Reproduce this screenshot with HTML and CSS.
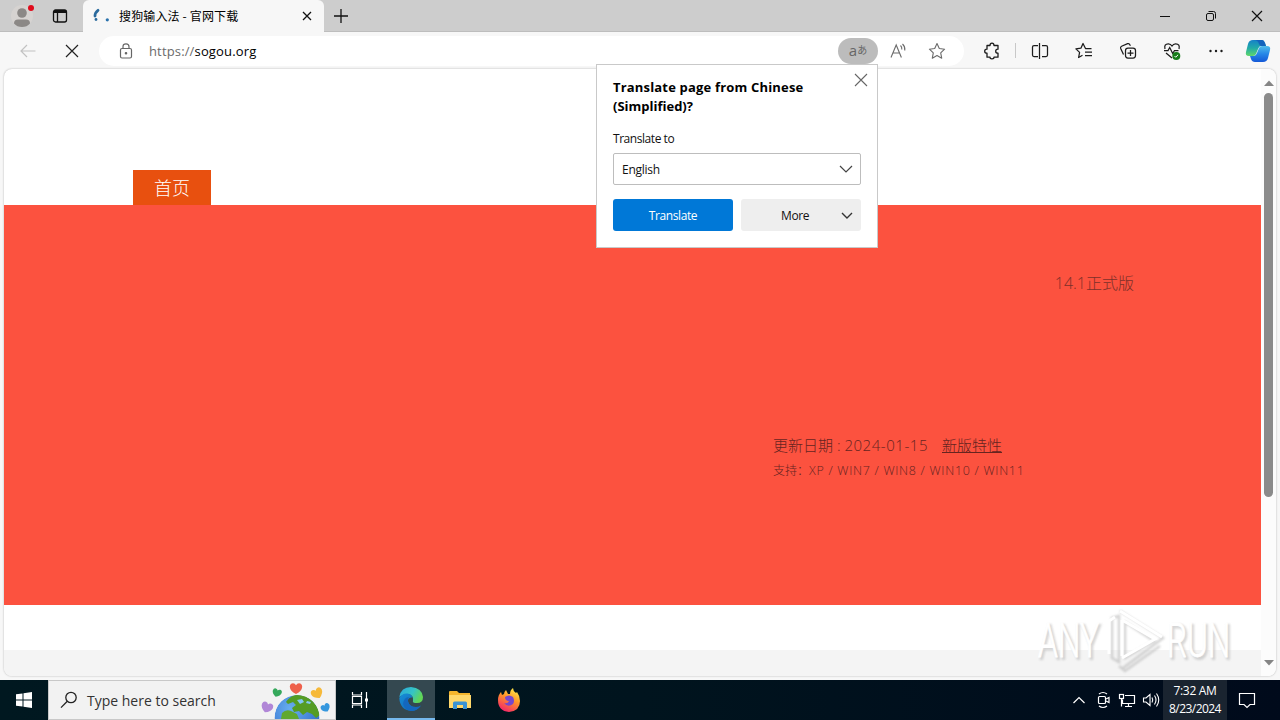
FILE: index.html
```html
<!DOCTYPE html>
<html lang="en">
<head>
<meta charset="utf-8">
<title>搜狗输入法 - 官网下载</title>
<link rel="stylesheet" href="styles.css">
</head>
<body>
<div class="screen">
  <header class="tabs">
    <div class="profile"><svg width="36" height="32" viewBox="0 0 36 32"><circle cx="18" cy="16" r="11" fill="#d6d3d1"/><circle cx="18" cy="13" r="4.8" fill="#8b8886"/><path d="M10 23.500q0-4 4-4h8q4 0 4 4-3 3.500-8 3.500t-8-3.500z" fill="#8b8886"/><circle cx="27" cy="8" r="3" fill="#e00b1c"/></svg></div>
    <div class="tabmenu"><svg width="16" height="16" viewBox="0 0 16 16" fill="none" stroke="#111" stroke-width="1.300"><rect x="1.500" y="2" width="13" height="12" rx="2"/><path d="M2 3.500h12" stroke-width="3"/><path d="M5.500 5v9"/></svg></div>
    <div class="tab">
      <svg class="spinner" width="18" height="18" viewBox="0 0 18 18"><path d="M3 9q0-3.500 3-5.700" fill="none" stroke="#2a6a9d" stroke-width="2.800" stroke-linecap="round"/><circle cx="4" cy="12.500" r="1.400" fill="#2a6a9d"/><circle cx="15.300" cy="12.800" r="1.600" fill="#2a72ad"/></svg>
      <span class="tabtitle">搜狗输入法 - 官网下载</span>
      <svg width="10" height="10" viewBox="0 0 10 10" stroke="#111" stroke-width="1.300"><path d="M1 1l8 8M9 1l-8 8"/></svg>
    </div>
    <div class="newtab"><svg width="14" height="14" viewBox="0 0 14 14" stroke="#111" stroke-width="1.300"><path d="M7 0v14M0 7h14"/></svg></div>
    <div class="wincontrols">
      <svg width="46" height="32" viewBox="0 0 46 32" fill="none" stroke="#111"><path d="M18 16.500h10"/></svg>
      <svg width="46" height="32" viewBox="0 0 46 32" fill="none" stroke="#111"><rect x="18.500" y="13.500" width="7" height="7" rx="1.500"/><path d="M20.500 11.500h5q2 0 2 2v5"/></svg>
      <svg width="46" height="32" viewBox="0 0 46 32" fill="none" stroke="#111" stroke-width="1.200"><path d="M18 11l10 10M28 11L18 21"/></svg>
    </div>
  </header>

  <nav class="toolbar">
    <div class="navbtn"><svg width="16" height="14" viewBox="0 0 16 14" fill="none" stroke="#c2c2c2" stroke-width="1.200"><path d="M15.500 7H1M7 1L1 7l6 6"/></svg></div>
    <div class="navbtn"><svg width="14" height="14" viewBox="0 0 14 14" fill="none" stroke="#222" stroke-width="1.200"><path d="M1 1l12 12M13 1L1 13"/></svg></div>
    <div class="address">
      <svg class="lock" width="14" height="16" viewBox="0 0 14 16" fill="none" stroke="#666" stroke-width="1.200"><rect x="1.500" y="5.500" width="11" height="9.500" rx="1.500"/><path d="M4 5.500V3.700q0-2.900 3-2.900t3 2.900v1.800"/><circle cx="7" cy="10.300" r=".7" fill="#666"/></svg>
      <span class="url"><span class="scheme">https://</span>sogou.org</span>
      <span class="pill"><span class="latin">a</span><span class="kana">あ</span></span>
      <svg class="addricon" width="40" height="22" viewBox="0 0 40 22" fill="none" stroke="#6b6b6b" stroke-width="1.100"><path d="M13 17.500L18.200 5l5.200 12.500M14.900 13h6.600M22.500 5.500q1.600 1.500 1.300 4M24.500 4q2.800 2.500 2.300 6.500"/></svg>
      <svg class="addricon" width="38" height="22" viewBox="0 0 38 22" fill="none" stroke="#6b6b6b" stroke-width="1.100" stroke-linejoin="round"><path d="M19 3.500l2.300 5 5.300.700-3.900 3.700 1 5.300-4.700-2.600-4.700 2.600 1-5.300-3.900-3.700 5.300-.700z"/></svg>
    </div>
    <div class="tools">
      <svg width="44" height="24" viewBox="0 0 44 24" fill="none" stroke="#1c1c1c" stroke-width="1.300" stroke-linejoin="round"><path d="M17 6.500h3q0-2.300 2-2.300t2 2.300h4v3.700q-2.300 0-2.300 2t2.300 2v4h-4q0 1.600-2 1.600t-2-1.600h-3v-4q-2.300 0-2.300-2t2.300-2z"/></svg>
      <span class="sep"></span>
      <svg width="44" height="24" viewBox="0 0 44 24" fill="none" stroke="#1c1c1c" stroke-width="1.250"><path d="M20 6.500h-4q-1.500 0-1.500 1.500v8q0 1.500 1.500 1.500h4M24 6.500h4q1.500 0 1.500 1.500v8q0 1.500-1.500 1.500h-4M21.500 4v16"/></svg>
      <svg width="44" height="24" viewBox="0 0 44 24" fill="none" stroke="#1c1c1c" stroke-width="1.250" stroke-linejoin="round"><path d="M29.500 9.500h-6L21 4.500l-2.100 4.700-5 .700 3.700 3.500-1 5.100 3.900-2.200M23 13h7M23 16.500h7"/></svg>
      <svg width="44" height="24" viewBox="0 0 44 24" fill="none" stroke="#1c1c1c" stroke-width="1.250"><path d="M17.500 15.500l-2.800-6q-.6-1.600.9-2.300l6-2.500q1.600-.6 2.300 1l.5 1"/><rect x="19.500" y="9" width="10" height="10" rx="2.500"/><path d="M24.500 11v6M21.500 14h6"/></svg>
      <svg width="44" height="24" viewBox="0 0 44 24" fill="none" stroke="#1c1c1c" stroke-width="1.250"><path d="M15 10q-1.200-5 3.300-5.200Q20.600 4.700 22 7q1.400-2.300 3.700-2.200 4.500.2 3.300 5.200M14 11.500h4l1.700-3 3 6 1.800-3h4M16 14l6 5"/><circle cx="26.300" cy="17" r="4" fill="#157c19" stroke="none"/><path d="M24.500 17l1.200 1.200 2.400-2.400" stroke="#fff" stroke-width="1"/></svg>
      <svg width="44" height="24" viewBox="0 0 44 24" fill="#1c1c1c"><circle cx="16.500" cy="12" r="1.200"/><circle cx="22" cy="12" r="1.200"/><circle cx="27.500" cy="12" r="1.200"/></svg>
      <svg width="40" height="28" viewBox="0 0 40 28"><defs><linearGradient id="cpa" x1="0" y1="0" x2="0" y2="1"><stop offset="0" stop-color="#1681c8"/><stop offset=".5" stop-color="#21aaa8"/><stop offset="1" stop-color="#60d86a"/></linearGradient><linearGradient id="cpb" x1="0" y1="0" x2="0" y2="1"><stop offset="0" stop-color="#50bceb"/><stop offset=".5" stop-color="#2687e7"/><stop offset="1" stop-color="#1458d7"/></linearGradient></defs><path d="M15 3h9q2 0 3 3l1 3h-5q-2 0-3 3l-2 5q-1 2-3 2h-4q-4 0-3-4l2-8q1-4 5-4z" fill="url(#cpa)"/><path d="M16 3h8q2 0 3 3l1 3h-5q-1 0-2-2-1-4-5-4z" fill="#1463bc"/><path d="M25 25h-8q-3 0-4-3l-1-3h4q2 0 3-3l2-5q1-2 3-2h5q4 0 3 4l-2 8q-1 4-5 4z" fill="url(#cpb)"/></svg>
    </div>
  </nav>

  <main class="frame">
    <div class="page">
      <div class="menu"><a class="home">首页</a></div>
      <section class="hero">
        <div class="version">14.1正式版</div>
        <div class="update"><span class="date">更新日期 : <span class="num">2024-01-15</span></span><a class="feature">新版特性</a></div>
        <div class="support">支持：<span class="systems">XP / WIN7 / WIN8 / WIN10 / WIN11</span></div>
      </section>
      <div class="gap"></div>
      <div class="foot"></div>
    </div>
    <div class="scroll">
      <svg width="10" height="6" viewBox="0 0 10 6"><path d="M0 6l5-5.500L10 6z" fill="#858585"/></svg>
      <div class="thumb"></div>
      <svg class="down" width="10" height="6" viewBox="0 0 10 6"><path d="M0 0l5 5.500L10 0z" fill="#858585"/></svg>
    </div>
  </main>

  <footer class="taskbar">
    <div class="start"><svg width="16" height="16" viewBox="0 0 16 16" fill="#fff"><path d="M0 2.300l6.500-.9v6.100H0zM7.500 1.200L16 0v7.500H7.500zM0 8.500h6.500v6.100L0 13.700zM7.500 8.500H16V16l-8.500-1.200z"/></svg></div>
    <div class="search">
      <svg width="18" height="18" viewBox="0 0 18 18" fill="none" stroke="#222" stroke-width="1.300"><circle cx="11" cy="6.500" r="5.200"/><path d="M7.300 10.300L1 16.600"/></svg>
      <span class="searchtext">Type here to search</span>
      <svg class="doodle" width="72" height="38" viewBox="0 0 72 38"><defs><path id="heart" d="M0 6Q-6 3-6.200-1.200-6-4.800-3-4.800-1-4.800 0-2.800 1-4.800 3-4.800 6-4.800 6.200-1.200 6 3 0 6z"/><radialGradient id="sea" cx=".35" cy=".3" r=".8"><stop offset="0" stop-color="#68aef0"/><stop offset="1" stop-color="#2c66c8"/></radialGradient><clipPath id="globe"><circle cx="37" cy="36.500" r="22.500"/></clipPath></defs>
        <g clip-path="url(#globe)"><circle cx="37" cy="36.500" r="22.500" fill="url(#sea)"/><path d="M26 21q3-5 9-7 9-1 15 4 8 6 10 16l-4 3-4-4-5-2-4 3-4-4-5 1-2-4 4-3-3-3-5 2z" fill="#559c24"/><path d="M22 32q4-4 9-2l6 3 2 5H21z" fill="#61a82e"/><path d="M37 19l5-1 2 3-4 2zM47 20l4 1-1 2-4-1z" fill="#83c7f3"/></g>
        <use href="#heart" transform="translate(36 7)" fill="#ee604b"/><use href="#heart" transform="translate(17 11.500) rotate(18) scale(.75)" fill="#35a85b"/><use href="#heart" transform="translate(57 12) rotate(-28) scale(.95)" fill="#f6b93a"/><use href="#heart" transform="translate(7 26) rotate(22) scale(.95)" fill="#b187d7"/><use href="#heart" transform="translate(65.500 26.500) rotate(-28) scale(.75)" fill="#3597de"/></svg>
    </div>
    <div class="app"><svg width="20" height="18" viewBox="0 0 20 18" fill="none" stroke="#fff" stroke-width="1.200"><path d="M2.500 1v3h9V1M2.500 17v-3h9v3M2.500 5.500v7h9v-7zM16.500 1v16"/><path d="M15 7.500h3v3h-3z" fill="#fff" stroke="none"/></svg></div>
    <div class="app active"><svg width="24" height="24" viewBox="0 0 24 24"><defs><linearGradient id="eg" x1="0" y1="0" x2="1" y2=".4"><stop offset="0" stop-color="#2aa6dc"/><stop offset=".6" stop-color="#35c4c6"/><stop offset="1" stop-color="#61d657"/></linearGradient><linearGradient id="eb" x1="0" y1="0" x2="1" y2="1"><stop offset="0" stop-color="#168ed9"/><stop offset="1" stop-color="#1061ad"/></linearGradient></defs><path d="M.3 10Q2 0 12 0q11 1 12 10 0 6-6 6-5 0-4-2 1-6-5-7-5 0-8.700 3z" fill="url(#eg)"/><path d="M.3 11Q3 6 8.500 6.500q4 .5 5 4Q9 10 9 14q1 6 8 6 3 0 5-1.500Q18 24 12 24 1 23 .3 11z" fill="url(#eb)"/><path d="M4 17q1-7 6-7-2 2-1 5 2 5 8 5 3 0 5-1.500Q18 24 12 24q-6-1-8-7z" fill="#1467bd"/></svg></div>
    <div class="app"><svg width="22" height="20" viewBox="0 0 22 20"><path d="M0 2q0-1 1-1h7l2 2h11v15H0z" fill="#f5b62d"/><path d="M0 5h22v13H0z" fill="#ffd86b"/><path d="M4 19v-6q0-1.500 1.500-1.500h11Q18 11.500 18 13v6h-4v-4H8v4z" fill="#3993d4"/></svg></div>
    <div class="app"><svg width="24" height="24" viewBox="0 0 24 24"><defs><linearGradient id="ff" x1=".8" y1="0" x2=".3" y2="1"><stop offset="0" stop-color="#fff04a"/><stop offset=".45" stop-color="#ff9528"/><stop offset="1" stop-color="#f3236b"/></linearGradient></defs><path d="M1 12Q1 7 4 4l1 3 2-1q0-2 2-4l2 4h2q0-4 3-6 0 3 3 5l1-1q3 4 3 9 0 10-11 11Q1 23 1 12z" fill="url(#ff)"/><path d="M8 9q4-3 8 0 2 4 0 7-5 4-9-1 4 1 5-2-4 0-4-4z" fill="#7547cd"/></svg></div>
    <div class="tray">
      <svg width="24" height="40" viewBox="0 0 24 40" fill="none" stroke="#fff" stroke-width="1.200"><path d="M6.500 23l5.500-5.500 5.500 5.500"/></svg>
      <svg width="24" height="40" viewBox="0 0 24 40" fill="none" stroke="#fff" stroke-width="1.200"><rect x="7.500" y="16.500" width="7" height="7" rx="1"/><path d="M15 19l3-1.500v5L15 21M8 14q4-3 8 0M8 26q4 3 8 0"/></svg>
      <svg width="24" height="40" viewBox="0 0 24 40" fill="none" stroke="#fff" stroke-width="1.200"><path d="M10 15.500h9.500v8H7.500v-4M13.500 23.500v3M10 26.500h7"/><rect x="4.500" y="14.500" width="4" height="4"/><path d="M6.500 18.500v8"/></svg>
      <svg width="24" height="40" viewBox="0 0 24 40" fill="none" stroke="#fff" stroke-width="1.100"><path d="M4.500 18h2.500l4-3.500v11L7 22H4.500zM13 17.500q1.500 2.500 0 5M15.500 15.500q3 4.500 0 9M17.500 13.500q4.500 6.500 0 13"/></svg>
    </div>
    <div class="clock"><span class="time">7:32 AM</span><span class="day">8/23/2024</span></div>
    <div class="notify"><svg width="18" height="18" viewBox="0 0 18 18" fill="none" stroke="#fff" stroke-width="1.200"><path d="M1.500 1.500h15v11h-4.500L9 15.500l-3-3H1.500z"/></svg></div>
  </footer>

  <div class="popup">
    <svg class="close" width="14" height="14" viewBox="0 0 14 14" stroke="#666" stroke-width="1.100"><path d="M1 1l12 12M13 1L1 13"/></svg>
    <div class="question"><div class="q1">Translate page from Chinese</div><div class="q2">(Simplified)?</div></div>
    <div class="label"><span>Translate to</span></div>
    <div class="select"><span>English</span><svg width="14" height="8" viewBox="0 0 14 8" fill="none" stroke="#444" stroke-width="1.200"><path d="M1 1l6 6 6-6"/></svg></div>
    <div class="buttons"><div class="primary"><span>Translate</span></div><div class="more"><span>More</span><svg width="12" height="7" viewBox="0 0 12 7" fill="none" stroke="#333" stroke-width="1.400"><path d="M1 1l5 5 5-5"/></svg></div></div>
  </div>

  <svg class="watermark" width="204" height="72" viewBox="0 0 204 72">
    <g class="wmshade"><text x="4" y="53" textLength="61" lengthAdjust="spacingAndGlyphs">ANY</text><text x="133" y="53" textLength="63" lengthAdjust="spacingAndGlyphs">RUN</text><path d="M83 10v46l-7-4V12zM84 5l43 27-40 30M89 16v36l29-17zM83 60l6 5 35-25"/></g>
    <g class="wmlight"><text x="2" y="51" textLength="61" lengthAdjust="spacingAndGlyphs">ANY</text><text x="131" y="51" textLength="63" lengthAdjust="spacingAndGlyphs">RUN</text><path d="M73 48V15l6-4M84 5l42 26M86 14v36M86 14l33 19-33 19"/></g>
  </svg>
</div>
</body>
</html>
```
FILE: styles.css
```css
* { box-sizing: border-box; }
body { margin: 0; }
svg { display: block; flex: none; }
.screen { position: relative; width: 1280px; height: 720px; overflow: hidden; display: flex; flex-direction: column; background: #f7f7f7; font-family: "Open Sans", "Noto Sans", "Noto Sans CJK SC", sans-serif; font-size: 12px; color: #111; white-space: nowrap; }

.tabs { height: 32px; flex: none; display: flex; align-items: center; background: #cdcdcd; border-bottom: 1px solid #bdbdbd; }
.profile { width: 44px; padding-left: 4px; }
.tabmenu { width: 39px; padding-left: 8px; }
.tab { width: 241px; height: 32px; margin-bottom: -1px; padding: 0 12px 0 9px; display: flex; align-items: center; background: #f7f7f7; border-radius: 6px 6px 0 0; }
.spinner { margin-right: 9px; }
.tabtitle { flex: 1; padding-bottom: 2px; font-family: "Noto Sans CJK SC", sans-serif; font-size: 12px; letter-spacing: .15px; color: #000; }
.newtab { width: 34px; padding-left: 10px; }
.wincontrols { margin-left: auto; display: flex; }

.toolbar { height: 37px; flex: none; display: flex; align-items: center; padding-left: 6px; }
.navbtn { width: 44px; display: flex; justify-content: center; }
.address { width: 865px; height: 30px; margin-left: 5px; border-radius: 15px; background: #fff; display: flex; align-items: center; padding-left: 20px; }
.lock { margin-right: 16px; }
.url { flex: 1; font-size: 13px; letter-spacing: .15px; color: #000; }
.scheme { color: #6b6b6b; }
.pill { width: 40px; height: 26px; border-radius: 13px; background: #bcbcbc; color: #666; display: flex; align-items: center; justify-content: center; line-height: 18px; padding-bottom: 2px; }
.latin { font-size: 15px; }
.kana { font-family: "Noto Sans CJK JP", sans-serif; font-size: 10px; }
.address .addricon:last-child { margin-right: 8px; }
.tools { margin-left: 6px; display: flex; align-items: center; }
.sep { width: 1px; height: 15px; margin: 0 2px 0 1px; background: #c8c8c8; }

.frame { height: 607px; flex: none; margin: 0 4px 4px; display: flex; background: #fff; border-radius: 8px; overflow: hidden; box-shadow: 0 0 2px #aaa; }
.page { width: 1257px; display: flex; flex-direction: column; }
.menu { height: 136px; padding-left: 129px; display: flex; align-items: flex-end; }
.home { width: 78px; height: 35px; background: #e8500f; color: #fff; font: 300 18px/35px "Noto Sans CJK SC", sans-serif; text-align: center; }
.hero { height: 400px; background: #fc523f; color: #66241f; font-family: "Open Sans", "Noto Sans CJK SC", sans-serif; font-weight: 300; display: flex; flex-direction: column; }
.version { margin: 65px 127px 0 auto; font-size: 16px; line-height: 26px; color: #7d3029; }
.update { margin: 139px 0 0 769px; display: flex; font-size: 15px; line-height: 20px; }
.date { width: 169px; }
.num { letter-spacing: .55px; }
.feature { text-decoration: underline; }
.support { margin: 6px 0 0 769px; font-size: 12px; line-height: 20px; }
.systems { font-size: 12.5px; letter-spacing: .7px; }
.gap { height: 45px; }
.foot { flex: 1; background: #f4f4f4; }
.scroll { width: 15px; background: #fcfcfc; display: flex; flex-direction: column; align-items: center; padding: 11px 0 10px; }
.thumb { width: 9px; height: 404px; margin-top: 7px; border-radius: 5px; background: #8b8b8b; }
.down { margin-top: auto; }

.taskbar { height: 40px; flex: none; display: flex; background: linear-gradient(90deg, #001820, #00141e 50%, #000a1b); color: #fff; }
.start { width: 48px; display: flex; align-items: center; justify-content: center; }
.search { width: 288px; background: #f2f2f2; border: 1px solid #c8c8c8; display: flex; align-items: center; padding-left: 11px; }
.searchtext { margin-left: 9px; flex: 1; font-size: 14px; color: #333; }
.doodle { margin-right: 3px; }
.app { width: 49px; display: flex; align-items: center; justify-content: center; }
.app + .app { width: 48px; }
.app:nth-child(3) { width: 51px; padding-right: 3px; }
.app.active { background: #344850; border-bottom: 2px solid #76b9ed; }
.app + .app + .app { width: 49px; }
.tray { margin-left: auto; display: flex; }
.clock { width: 64px; background: #1a2430; display: flex; flex-direction: column; align-items: center; justify-content: center; font-size: 12px; line-height: 18px; }
.time { letter-spacing: -.3px; }
.day { letter-spacing: -.55px; }
.notify { width: 53px; padding: 12px 0 0 11px; }

.popup { position: absolute; left: 596px; top: 64px; width: 282px; height: 184px; padding: 13px 16px 0; background: #fff; border: 1px solid #c9c9c9; }
.close { position: absolute; right: 9px; top: 8px; }
.question { height: 38px; font-size: 13px; line-height: 19px; font-weight: 700; color: #000; }
.q1 { letter-spacing: .18px; }
.label { height: 20px; margin-top: 13px; line-height: 20px; letter-spacing: -.45px; }
.select { height: 32px; margin-top: 4px; border: 1px solid #bdbdbd; border-radius: 2px; padding: 0 7px 0 8px; display: flex; align-items: center; justify-content: space-between; letter-spacing: -.25px; }
.buttons { margin-top: 14px; display: flex; gap: 8px; }
.primary, .more { width: 120px; height: 32px; border-radius: 3px; display: flex; align-items: center; justify-content: center; letter-spacing: -.4px; }
.primary { background: #0078d7; color: #fff; }
.more { background: #eee; justify-content: space-between; padding: 0 8px 0 40px; }

.watermark { position: absolute; left: 1036px; top: 606px; }
.watermark text { font-family: "Roboto", sans-serif; font-size: 48px; font-weight: 300; }
.wmshade { fill: #ccc; stroke: #bbb; stroke-width: 2; opacity: .65; filter: blur(1.2px); }
.wmshade path { fill: none; stroke-width: 2.500; }
.wmlight { fill: #fff; stroke: #fff; stroke-width: .8; }
.wmlight path { fill: none; stroke-width: 3; }
```
